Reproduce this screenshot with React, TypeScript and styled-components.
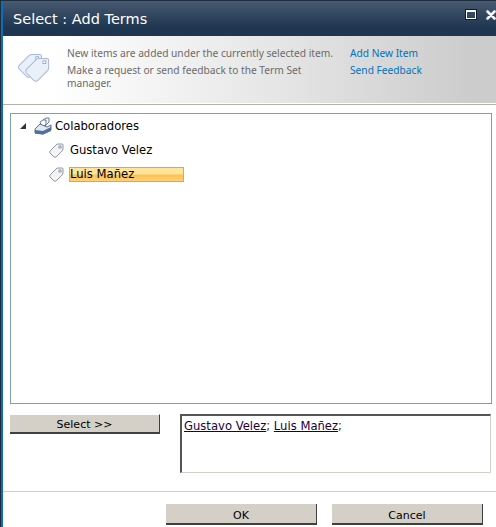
import styled, { createGlobalStyle } from "styled-components"

const GlobalStyle = createGlobalStyle`
  html, body {
    margin: 0;
    padding: 0;
    background: #ffffff;
  }
`

function TagShape({ x = 0, y = 0 }: { x?: number; y?: number }) {
  return (
    <g transform={`translate(${x} ${y})`}>
      <path
        d="M1 17 L14 4 Q15 3 17 3 L27 3 Q29 3 29 5 L29 15 Q29 17 28 18 L15 31 Q13 32 11 31 L1 21 Q0 19 1 17 Z"
        fill="#eaf0f9"
        stroke="#a9b9d6"
        strokeWidth="1.3"
      />
      <rect x="22" y="6" width="3.5" height="3.5" fill="#ffffff" stroke="#8fa3c4" />
    </g>
  )
}

function TagsIcon() {
  return (
    <BigTags width="34" height="32" viewBox="0 0 42 40">
      <TagShape x={0} y={0} />
      <TagShape x={9} y={5} />
    </BigTags>
  )
}

function SmallTag() {
  return (
    <svg width="15" height="15" viewBox="0 0 15 15">
      <path
        d="M1 8 L7 2 Q8 1 9 1 L13 1 Q14 1 14 2 L14 6 Q14 7 13 8 L7 14 Q6 14.5 5 14 L1 10 Q0.5 9 1 8 Z"
        fill="#f4f4f4"
        stroke="#8e9aa8"
      />
      <rect x="10" y="3" width="2" height="2" fill="#ffffff" stroke="#7f8b99" strokeWidth="0.8" />
    </svg>
  )
}

function TermSetIcon() {
  return (
    <svg width="18" height="18" viewBox="0 0 18 18">
      <path d="M9 3 L12 1 L15 1 L15 5 L11 9 Z" fill="#eef2f7" stroke="#5f6f86" strokeWidth="0.9" />
      <path d="M6 5 L9 3 L12 3 L12 7 L8 11 Z" fill="#ffffff" stroke="#5f6f86" strokeWidth="0.9" />
      <path d="M1 12 L6 7 L13 10 L17 8 L17 13 L9 17 L1 16 Z" fill="#dfe7f1" stroke="#4d5f7c" strokeWidth="0.9" />
      <path d="M1 13 L9 14 L17 10 L17 14 L9 17.5 L1 16.5 Z" fill="#4f7099" />
    </svg>
  )
}

export default function App() {
  return (
    <>
      <GlobalStyle />
      <Dialog>
        <Frame>
          <TitleBar>
            <Title>Select : Add Terms</Title>
            <WindowButtons>
              <MaximizeButton />
              <CloseButton>
                <svg width="10" height="10" viewBox="0 0 10 10">
                  <path d="M1.5 1.5 L8.5 8.5 M8.5 1.5 L1.5 8.5" stroke="#f4f6f8" strokeWidth="2.6" strokeLinecap="round" />
                </svg>
              </CloseButton>
            </WindowButtons>
          </TitleBar>
          <InfoBand>
            <TagsIcon />
            <InfoText>
              <InfoLine>New items are added under the currently selected item.</InfoLine>
              <InfoLine>Make a request or send feedback to the Term Set manager.</InfoLine>
            </InfoText>
            <InfoLinks>
              <InfoLink>Add New Item</InfoLink>
              <InfoLink>Send Feedback</InfoLink>
            </InfoLinks>
          </InfoBand>
          <Content>
            <TreeBox>
              <TreeRow>
                <Expander />
                <TermSetIcon />
                <RootLabel>Colaboradores</RootLabel>
              </TreeRow>
              <TermRow>
                <SmallTag />
                <TreeLabel>Gustavo Velez</TreeLabel>
              </TermRow>
              <TermRow>
                <SmallTag />
                <SelectedLabel>Luis Mañez</SelectedLabel>
              </TermRow>
            </TreeBox>
            <PickRow>
              <SelectButton>Select &gt;&gt;</SelectButton>
              <PickedBox>
                <PickedLink>Gustavo Velez</PickedLink>; <PickedLink>Luis Mañez</PickedLink>;
              </PickedBox>
            </PickRow>
          </Content>
          <Footer>
            <FooterButton>OK</FooterButton>
            <FooterButton>Cancel</FooterButton>
          </Footer>
        </Frame>
      </Dialog>
    </>
  )
}

const Dialog = styled.div`
  width: 496px;
  height: 527px;
  box-sizing: border-box;
  overflow: hidden;
  background: #ffffff;
  border-left: 1px solid #1d2d40;
  border-top: 1px solid #1d2d40;
  font-family: "DejaVu Sans", Verdana, sans-serif;
`

const Frame = styled.div`
  height: 100%;
  box-sizing: border-box;
  display: flex;
  flex-direction: column;
  border-left: 2px solid #0f6cb5;
  border-top: 1px solid #0f6cb5;
`

const TitleBar = styled.div`
  height: 33px;
  flex: none;
  display: flex;
  align-items: center;
  justify-content: space-between;
  padding: 0 0 1px 10px;
  background: linear-gradient(#46586f, #1f3651 75%);
`

const Title = styled.div`
  color: #ffffff;
  font-size: 14.5px;
`

const WindowButtons = styled.div`
  display: flex;
  align-items: center;
  gap: 10px;
  margin-bottom: 8px;
`

const MaximizeButton = styled.div`
  width: 8px;
  height: 6px;
  border: 1px solid #ffffff;
  border-top-width: 2px;
  outline: 1px solid #0e1c2c;
`

const CloseButton = styled.div`
  display: flex;
  width: 10px;
`

const BigTags = styled.svg`
  flex: none;
  margin: 16px 15px 0 15px;
`

const InfoBand = styled.div`
  height: 68px;
  flex: none;
  box-sizing: border-box;
  display: flex;
  align-items: flex-start;
  background: linear-gradient(90deg, #ffffff 10%, #e6e6e6 55%, #cccccc 95%);
  border-bottom: 1px solid #ffffff;
  box-shadow: 0 1px 0 #b6b2a6;
  font-family: "Noto Sans", sans-serif;
  font-size: 10.2px;
  line-height: 13px;
`

const InfoText = styled.div`
  width: 270px;
  padding-top: 11px;
  color: #6b6b6b;
`

const InfoLine = styled.div`
  margin-bottom: 4px;
`

const InfoLinks = styled.div`
  padding: 11px 0 0 13px;
`

const InfoLink = styled.div`
  color: #0072bc;
  margin-bottom: 4px;
`

const Content = styled.div`
  padding: 9px 4px 0 7px;
  flex: none;
  display: flex;
  flex-direction: column;
`

const TreeBox = styled.div`
  height: 291px;
  box-sizing: border-box;
  border: 1px solid #7f9db9;
  padding: 0 0 0 8px;
  font-size: 11.6px;
  color: #000000;
`

const TreeRow = styled.div`
  display: flex;
  align-items: center;
  gap: 2px;
  height: 24px;
`

const Expander = styled.span`
  width: 0;
  height: 0;
  margin: 0 6px 0 1px;
  border-style: solid;
  border-width: 0 0 6px 6px;
  border-color: transparent transparent #333333 transparent;
`

const TermRow = styled.div`
  display: flex;
  align-items: center;
  gap: 6px;
  height: 24px;
  padding-left: 30px;
`

const TreeLabel = styled.span`
  line-height: 14px;
`

const RootLabel = styled(TreeLabel)`
  margin-left: 1px;
`

const SelectedLabel = styled.span`
  width: 113px;
  height: 13px;
  box-sizing: content-box;
  margin-left: -1px;
  border: 1px solid #f0a040;
  line-height: 13px;
  background: linear-gradient(#ffe49a 45%, #ffc050 55%, #ffd27a);
`

const PickRow = styled.div`
  display: flex;
  align-items: flex-start;
  margin-top: 10px;
`

const SelectButton = styled.div`
  width: 150px;
  height: 20px;
  box-sizing: border-box;
  padding-top: 1px;
  display: flex;
  align-items: center;
  justify-content: center;
  background: #d4d0c8;
  border-right: 1px solid #404040;
  border-bottom: 2px solid #404040;
  border-top: 1px solid #ffffff;
  font-size: 11px;
  color: #000000;
`

const PickedBox = styled.div`
  width: 311px;
  height: 59px;
  box-sizing: border-box;
  margin-left: 20px;
  padding: 3px 2px;
  border: 1px solid #d4d0c8;
  border-top: 2px solid #555555;
  border-left: 2px solid #555555;
  font-size: 11.6px;
  line-height: 14px;
  color: #333333;
`

const PickedLink = styled.span`
  color: #20003a;
  text-decoration: underline;
`

const Footer = styled.div`
  margin-top: 18px;
  padding: 12px 0 0 163px;
  border-top: 1px solid #d0d0bf;
  display: flex;
  gap: 15px;
`

const FooterButton = styled.div`
  width: 151px;
  height: 21px;
  box-sizing: border-box;
  padding-top: 3px;
  display: flex;
  align-items: center;
  justify-content: center;
  background: #d4d0c8;
  border-right: 1px solid #404040;
  border-bottom: 2px solid #404040;
  font-size: 11px;
  color: #000000;
`
